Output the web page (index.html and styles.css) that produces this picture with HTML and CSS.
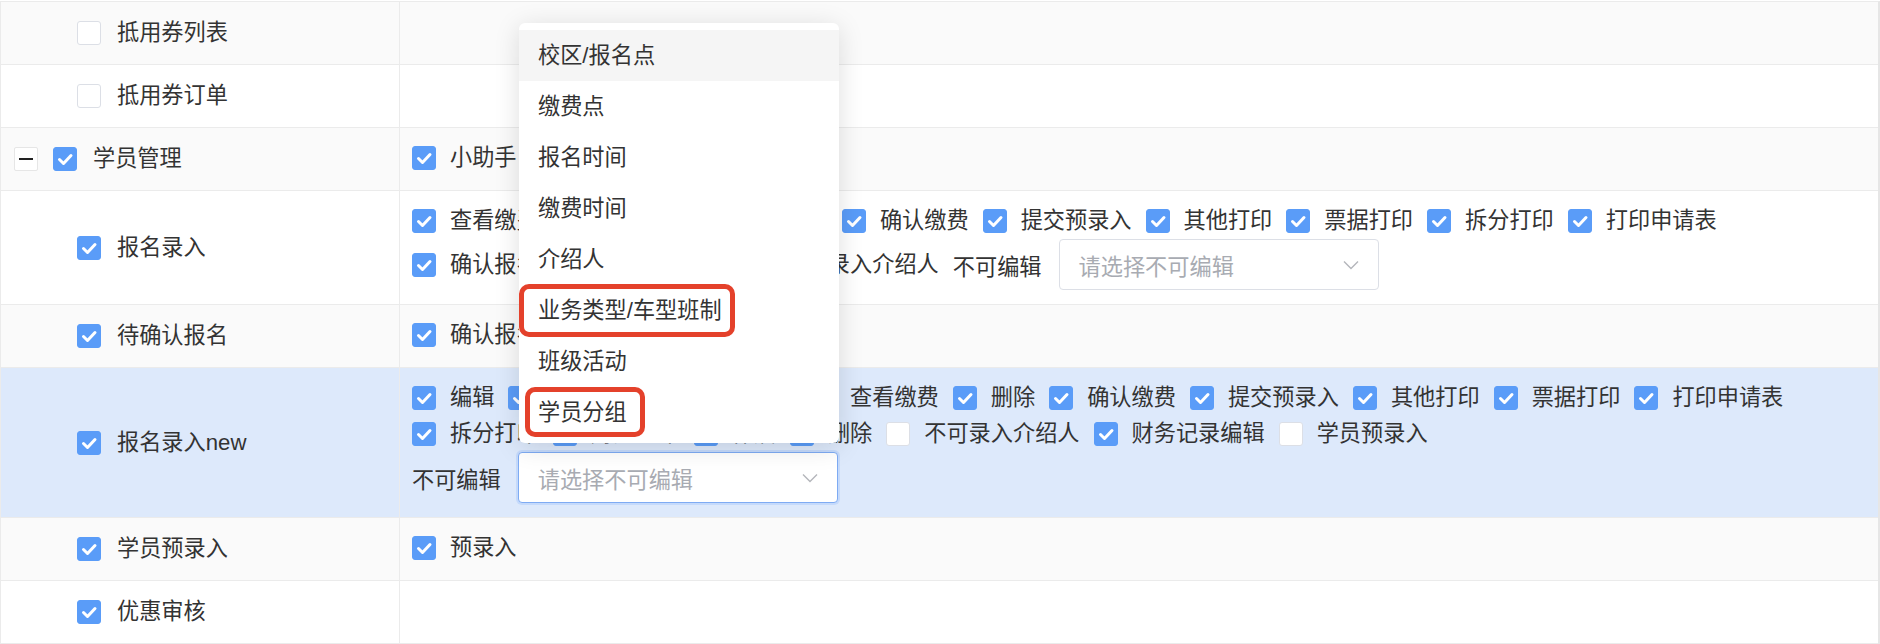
FILE: index.html
```html
<!DOCTYPE html>
<html lang="zh-CN">
<head>
<meta charset="utf-8">
<title>权限设置</title>
<link rel="stylesheet" href="styles.css">
</head>
<body>
<div class="page">
  <div class="tbl">
    <div class="row stripe">
      <div class="c1 child"><span class="cb"></span><span class="lbl">抵用券列表</span></div>
      <div class="c2"></div>
    </div>
    <div class="row">
      <div class="c1 child"><span class="cb"></span><span class="lbl">抵用券订单</span></div>
      <div class="c2"></div>
    </div>
    <div class="row stripe">
      <div class="c1 parent"><span class="toggle"><span class="minus"></span></span><span class="cb on"><svg viewBox="0 0 24 24"><path d="M6.5 12.5l4 4 7.5-8"/></svg></span><span class="lbl">学员管理</span></div>
      <div class="c2">
        <span class="item"><span class="cb on"><svg viewBox="0 0 24 24"><path d="M6.5 12.5l4 4 7.5-8"/></svg></span><span class="lbl">小助手</span></span>
      </div>
    </div>
    <div class="row">
      <div class="c1 child"><span class="cb on"><svg viewBox="0 0 24 24"><path d="M6.5 12.5l4 4 7.5-8"/></svg></span><span class="lbl">报名录入</span></div>
      <div class="c2">
        <span class="item"><span class="cb on"><svg viewBox="0 0 24 24"><path d="M6.5 12.5l4 4 7.5-8"/></svg></span><span class="lbl">查看缴费</span></span>
        <span class="item"><span class="cb on"><svg viewBox="0 0 24 24"><path d="M6.5 12.5l4 4 7.5-8"/></svg></span><span class="lbl">编辑</span></span>
        <span class="item"><span class="cb on"><svg viewBox="0 0 24 24"><path d="M6.5 12.5l4 4 7.5-8"/></svg></span><span class="lbl">删除</span></span>
        <span class="item"><span class="cb on"><svg viewBox="0 0 24 24"><path d="M6.5 12.5l4 4 7.5-8"/></svg></span><span class="lbl">打印</span></span>
        <span class="item"><span class="cb on"><svg viewBox="0 0 24 24"><path d="M6.5 12.5l4 4 7.5-8"/></svg></span><span class="lbl">确认缴费</span></span>
        <span class="item"><span class="cb on"><svg viewBox="0 0 24 24"><path d="M6.5 12.5l4 4 7.5-8"/></svg></span><span class="lbl">提交预录入</span></span>
        <span class="item"><span class="cb on"><svg viewBox="0 0 24 24"><path d="M6.5 12.5l4 4 7.5-8"/></svg></span><span class="lbl">其他打印</span></span>
        <span class="item"><span class="cb on"><svg viewBox="0 0 24 24"><path d="M6.5 12.5l4 4 7.5-8"/></svg></span><span class="lbl">票据打印</span></span>
        <span class="item"><span class="cb on"><svg viewBox="0 0 24 24"><path d="M6.5 12.5l4 4 7.5-8"/></svg></span><span class="lbl">拆分打印</span></span>
        <span class="item"><span class="cb on"><svg viewBox="0 0 24 24"><path d="M6.5 12.5l4 4 7.5-8"/></svg></span><span class="lbl">打印申请表</span></span>
        <span class="item"><span class="cb on"><svg viewBox="0 0 24 24"><path d="M6.5 12.5l4 4 7.5-8"/></svg></span><span class="lbl">确认报名</span></span>
        <span class="item"><span class="cb on"><svg viewBox="0 0 24 24"><path d="M6.5 12.5l4 4 7.5-8"/></svg></span><span class="lbl">作废</span></span>
        <span class="item"><span class="cb on"><svg viewBox="0 0 24 24"><path d="M6.5 12.5l4 4 7.5-8"/></svg></span><span class="lbl">退费</span></span>
        <span class="item"><span class="cb"></span><span class="lbl">不可录入介绍人</span></span>
        <span class="field"><span class="flabel">不可编辑</span><span class="select"><span class="ph">请选择不可编辑</span><svg class="arrow" viewBox="0 0 16 10"><path d="M1 1.5l7 7 7-7"/></svg></span></span>
      </div>
    </div>
    <div class="row stripe">
      <div class="c1 child"><span class="cb on"><svg viewBox="0 0 24 24"><path d="M6.5 12.5l4 4 7.5-8"/></svg></span><span class="lbl">待确认报名</span></div>
      <div class="c2">
        <span class="item"><span class="cb on"><svg viewBox="0 0 24 24"><path d="M6.5 12.5l4 4 7.5-8"/></svg></span><span class="lbl">确认报名</span></span>
      </div>
    </div>
    <div class="row active">
      <div class="c1 child"><span class="cb on"><svg viewBox="0 0 24 24"><path d="M6.5 12.5l4 4 7.5-8"/></svg></span><span class="lbl">报名录入new</span></div>
      <div class="c2">
        <span class="item"><span class="cb on"><svg viewBox="0 0 24 24"><path d="M6.5 12.5l4 4 7.5-8"/></svg></span><span class="lbl">编辑</span></span>
        <span class="item"><span class="cb on"><svg viewBox="0 0 24 24"><path d="M6.5 12.5l4 4 7.5-8"/></svg></span><span class="lbl">查看报名</span></span>
        <span class="item"><span class="cb on"><svg viewBox="0 0 24 24"><path d="M6.5 12.5l4 4 7.5-8"/></svg></span><span class="lbl">打印报名表</span></span>
        <span class="item"><span class="cb on"><svg viewBox="0 0 24 24"><path d="M6.5 12.5l4 4 7.5-8"/></svg></span><span class="lbl">查看缴费</span></span>
        <span class="item"><span class="cb on"><svg viewBox="0 0 24 24"><path d="M6.5 12.5l4 4 7.5-8"/></svg></span><span class="lbl">删除</span></span>
        <span class="item"><span class="cb on"><svg viewBox="0 0 24 24"><path d="M6.5 12.5l4 4 7.5-8"/></svg></span><span class="lbl">确认缴费</span></span>
        <span class="item"><span class="cb on"><svg viewBox="0 0 24 24"><path d="M6.5 12.5l4 4 7.5-8"/></svg></span><span class="lbl">提交预录入</span></span>
        <span class="item"><span class="cb on"><svg viewBox="0 0 24 24"><path d="M6.5 12.5l4 4 7.5-8"/></svg></span><span class="lbl">其他打印</span></span>
        <span class="item"><span class="cb on"><svg viewBox="0 0 24 24"><path d="M6.5 12.5l4 4 7.5-8"/></svg></span><span class="lbl">票据打印</span></span>
        <span class="item"><span class="cb on"><svg viewBox="0 0 24 24"><path d="M6.5 12.5l4 4 7.5-8"/></svg></span><span class="lbl">打印申请表</span></span>
        <span class="item"><span class="cb on"><svg viewBox="0 0 24 24"><path d="M6.5 12.5l4 4 7.5-8"/></svg></span><span class="lbl">拆分打印</span></span>
        <span class="item"><span class="cb on"><svg viewBox="0 0 24 24"><path d="M6.5 12.5l4 4 7.5-8"/></svg></span><span class="lbl">财务打印</span></span>
        <span class="item"><span class="cb on"><svg viewBox="0 0 24 24"><path d="M6.5 12.5l4 4 7.5-8"/></svg></span><span class="lbl">作废</span></span>
        <span class="item"><span class="cb on"><svg viewBox="0 0 24 24"><path d="M6.5 12.5l4 4 7.5-8"/></svg></span><span class="lbl">删除</span></span>
        <span class="item"><span class="cb"></span><span class="lbl">不可录入介绍人</span></span>
        <span class="item"><span class="cb on"><svg viewBox="0 0 24 24"><path d="M6.5 12.5l4 4 7.5-8"/></svg></span><span class="lbl">财务记录编辑</span></span>
        <span class="item"><span class="cb"></span><span class="lbl">学员预录入</span></span>
        <span class="field"><span class="flabel">不可编辑</span><span class="select focus"><span class="ph">请选择不可编辑</span><svg class="arrow" viewBox="0 0 16 10"><path d="M1 1.5l7 7 7-7"/></svg></span></span>
      </div>
    </div>
    <div class="row stripe">
      <div class="c1 child"><span class="cb on"><svg viewBox="0 0 24 24"><path d="M6.5 12.5l4 4 7.5-8"/></svg></span><span class="lbl">学员预录入</span></div>
      <div class="c2">
        <span class="item"><span class="cb on"><svg viewBox="0 0 24 24"><path d="M6.5 12.5l4 4 7.5-8"/></svg></span><span class="lbl">预录入</span></span>
      </div>
    </div>
    <div class="row">
      <div class="c1 child"><span class="cb on"><svg viewBox="0 0 24 24"><path d="M6.5 12.5l4 4 7.5-8"/></svg></span><span class="lbl">优惠审核</span></div>
      <div class="c2"></div>
    </div>
  </div>

  <div class="dropdown">
    <div class="dd-item hover">校区/报名点</div>
    <div class="dd-item">缴费点</div>
    <div class="dd-item">报名时间</div>
    <div class="dd-item">缴费时间</div>
    <div class="dd-item">介绍人</div>
    <div class="dd-item">业务类型/车型班制</div>
    <div class="dd-item">班级活动</div>
    <div class="dd-item">学员分组</div>
  </div>
  <div class="mark mark1"></div>
  <div class="mark mark2"></div>
</div>
</body>
</html>
```

FILE: styles.css
```css
* { box-sizing: border-box; }

body {
  margin: 0;
  background: #fff;
  color: #333;
  font-family: "Liberation Sans", "Noto Sans CJK SC", sans-serif;
  font-size: 22.2px;
}

.page {
  position: relative;
  width: 1880px;
  height: 644px;
  padding-top: 1px;
  overflow: hidden;
}

.tbl {
  border-top: 1px solid #ebebeb;
  border-left: 1px solid #ebebeb;
  border-right: 2px solid #e6e6e6;
}

.row {
  display: grid;
  grid-template-columns: 399px 1fr;
  border-bottom: 1px solid #ebebeb;
  background: #fff;
}

.row.stripe { background: #fafafa; }
.row.active { background: #dde9fb; }

.c1 {
  display: flex;
  align-items: center;
  border-right: 1px solid #ebebeb;
}

.c1.child { padding-left: 76px; }
.c1.parent { padding-left: 13px; }

.c1 .cb { margin-right: 16px; }

.toggle {
  width: 24px;
  height: 24px;
  margin-right: 15px;
  border: 1px solid #e6e6e6;
  border-radius: 2px;
  background: #fff;
  display: flex;
  align-items: center;
  justify-content: center;
  flex: none;
}

.minus {
  width: 14px;
  height: 2px;
  background: #222;
}

.c2 {
  min-height: 62px;
  padding: 12px 30px 14px 12px;
  display: flex;
  flex-wrap: wrap;
  align-items: center;
  align-content: flex-start;
}

.item {
  display: inline-flex;
  align-items: center;
  height: 36px;
  margin-right: 14px;
}

.item .cb { margin-right: 14px; }

.cb {
  width: 24px;
  height: 24px;
  flex: none;
  border: 1px solid #dcdfe6;
  border-radius: 3px;
  background: #fff;
  display: inline-flex;
  align-items: center;
  justify-content: center;
}

.cb.on {
  background: #5a9cf8;
  border-color: #5a9cf8;
}

.cb svg {
  width: 24px;
  height: 24px;
  flex: none;
}

.cb svg path {
  fill: none;
  stroke: #fff;
  stroke-width: 3;
  stroke-linecap: round;
  stroke-linejoin: round;
}

.lbl {
  line-height: 36px;
  white-space: nowrap;
}

.field {
  display: inline-flex;
  align-items: center;
  height: 51px;
}

.flabel {
  margin-right: 17px;
  white-space: nowrap;
}

.select {
  width: 320px;
  height: 51px;
  padding: 0 19px;
  border: 1px solid #dcdfe6;
  border-radius: 4px;
  background: #fff;
  display: flex;
  align-items: center;
  justify-content: space-between;
}

.select.focus {
  border-color: #7eabf3;
  box-shadow: 0 0 0 2px #c5dafb;
}

.ph {
  color: #a8abb2;
  white-space: nowrap;
}

.arrow {
  width: 16px;
  height: 10px;
}

.arrow path {
  fill: none;
  stroke: #b4b6bb;
  stroke-width: 1.4;
}

.dropdown {
  position: absolute;
  left: 519px;
  top: 23px;
  width: 320px;
  padding: 7px 0 5px;
  background: #fff;
  border-radius: 6px;
  box-shadow: 0 4px 26px rgba(0, 0, 0, 0.13);
}

.dd-item {
  height: 51px;
  line-height: 51px;
  padding-left: 19px;
  white-space: nowrap;
  color: #333;
}

.dd-item.hover { background: #f5f5f5; }

.mark {
  position: absolute;
  border: 5px solid #e4412b;
  border-radius: 10px;
}

.mark1 {
  left: 519px;
  top: 284px;
  width: 216px;
  height: 53px;
}

.mark2 {
  left: 525px;
  top: 387px;
  width: 120px;
  height: 50px;
}
```
